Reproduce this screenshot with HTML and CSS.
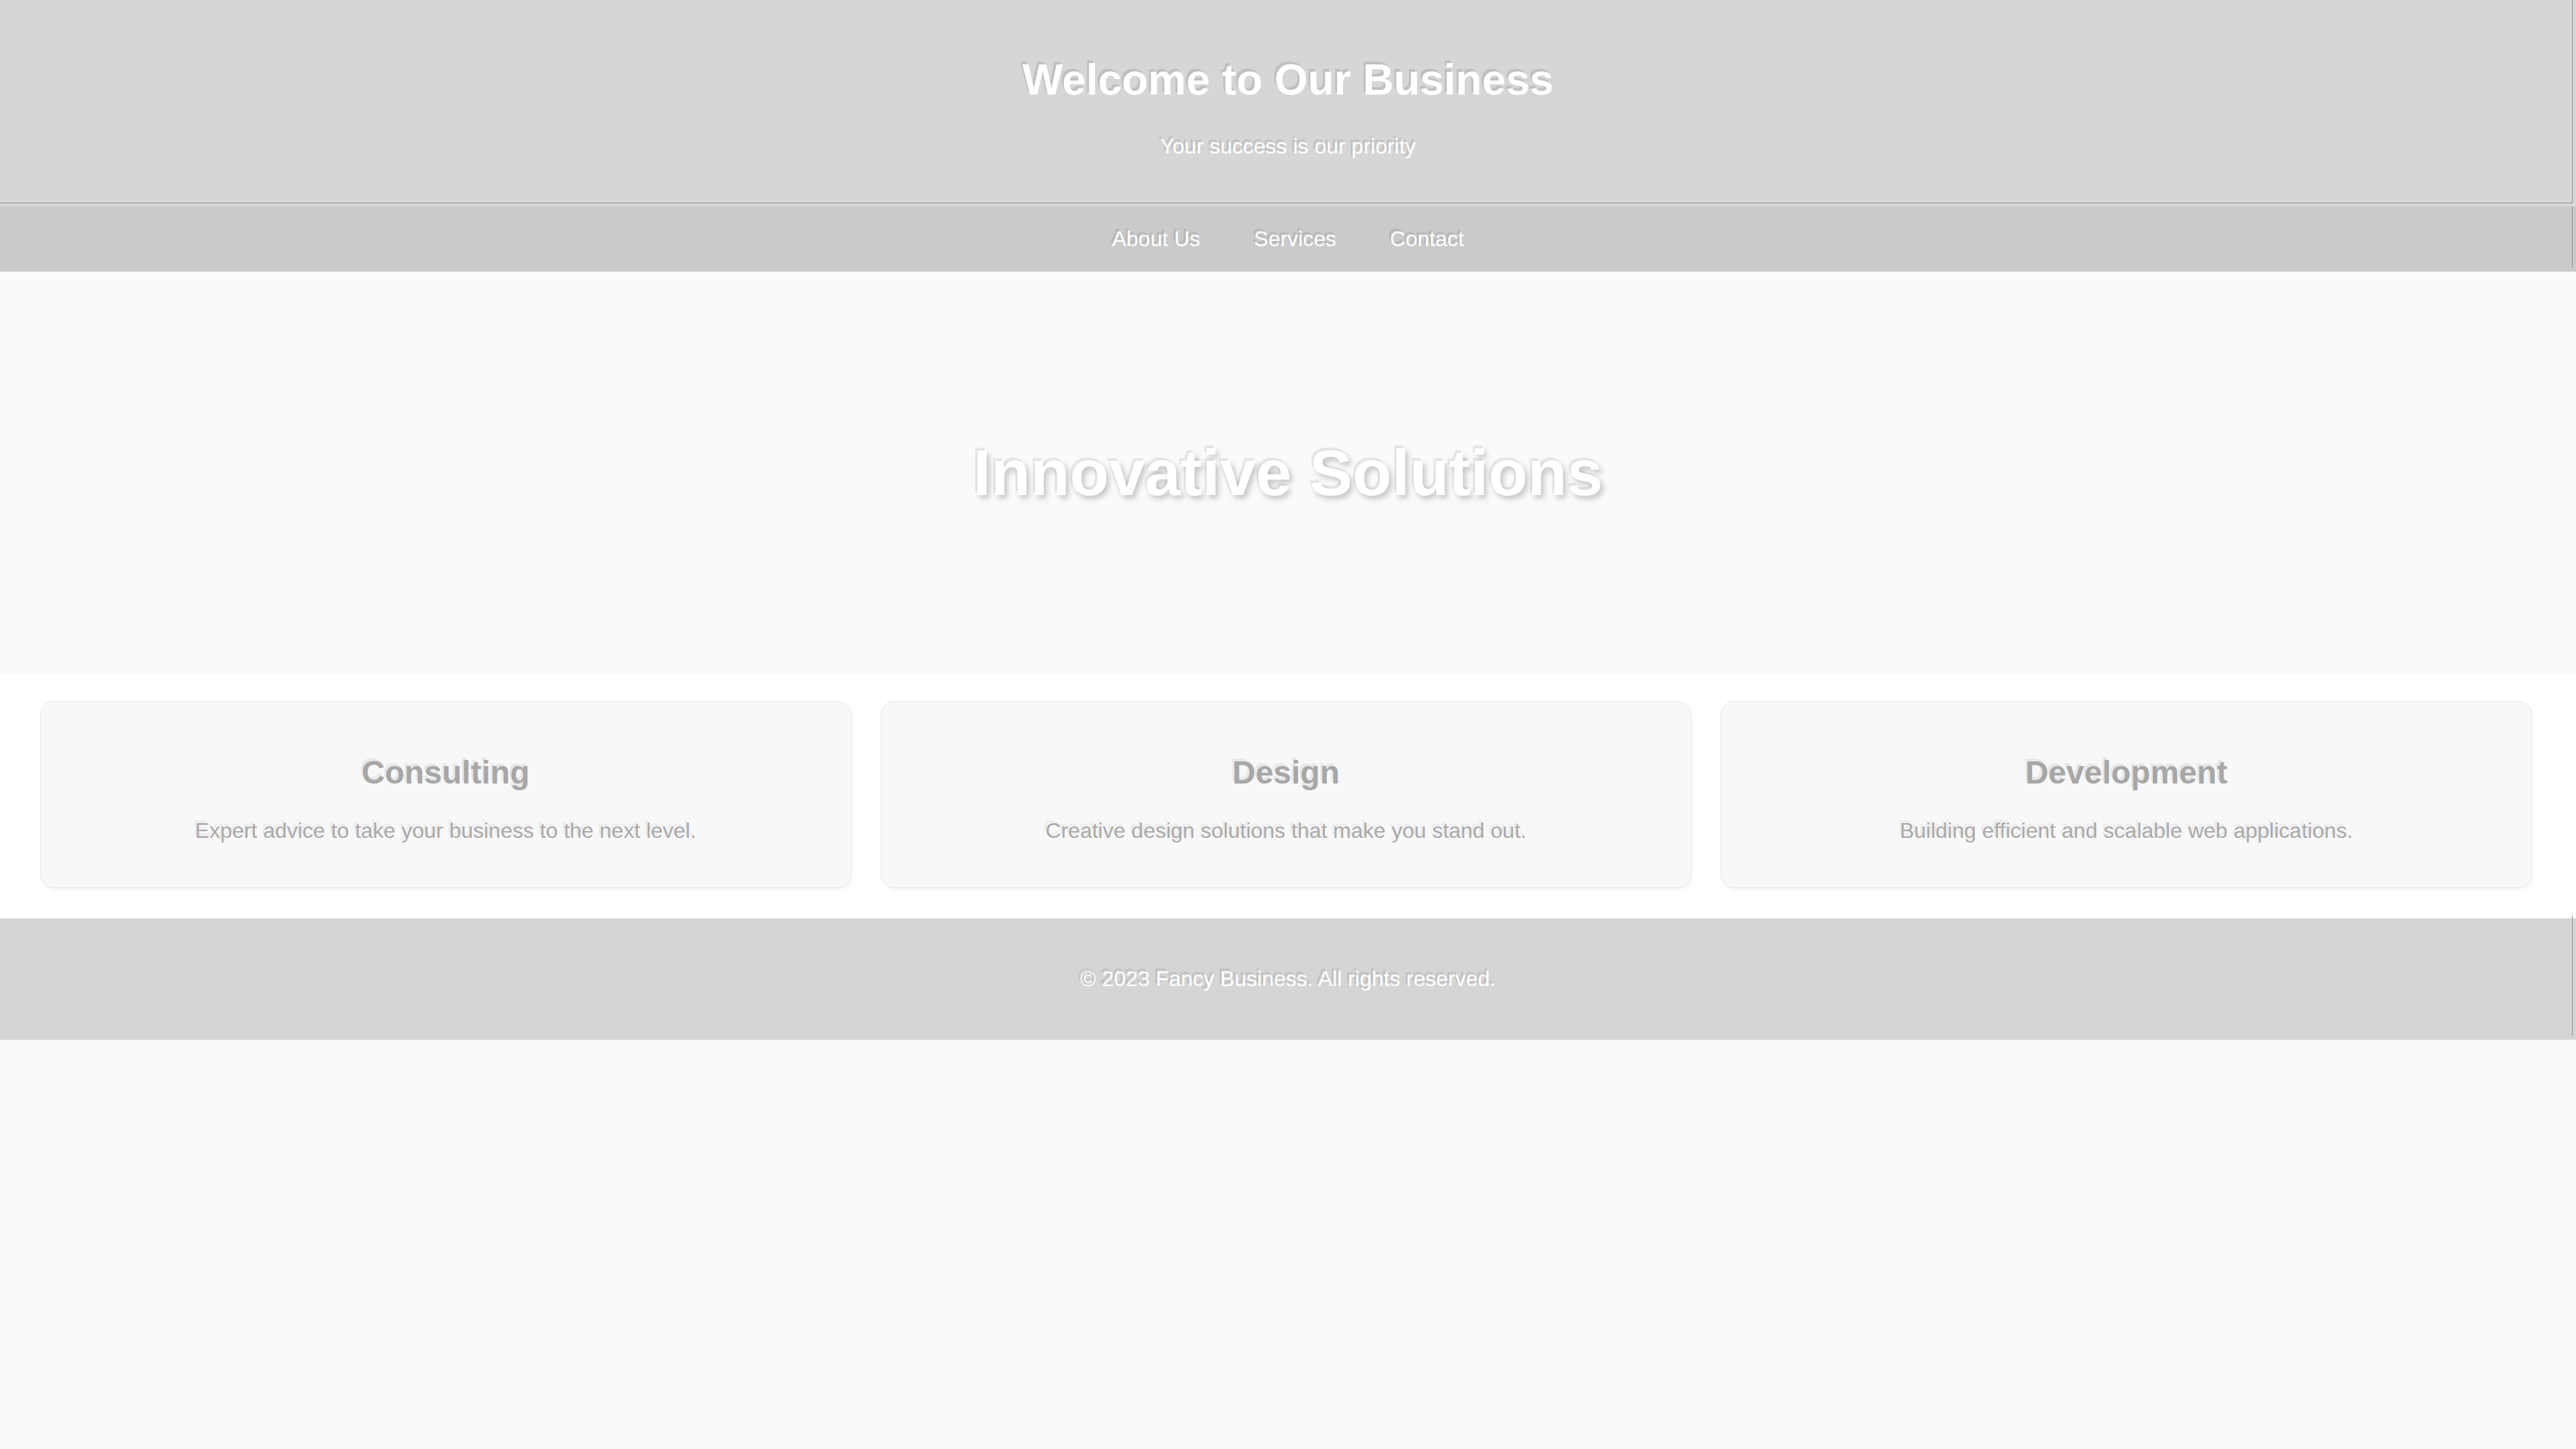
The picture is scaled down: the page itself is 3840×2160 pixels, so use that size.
FILE: index.html
```html
<!DOCTYPE html>
<html lang="en">
<head>
<meta charset="utf-8">
<title>Fancy Business</title>
<link rel="stylesheet" href="styles.css">
</head>
<body>
<header class="site-header">
  <h1 class="site-title">Welcome to Our Business</h1>
  <p class="site-tagline">Your success is our priority</p>
</header>
<nav class="site-nav">
  <a class="nav-link" href="#about">About Us</a>
  <a class="nav-link" href="#services">Services</a>
  <a class="nav-link" href="#contact">Contact</a>
</nav>
<section class="hero">
  <h2 class="hero-title">Innovative Solutions</h2>
</section>
<section class="services">
  <div class="card">
    <h3 class="card-title">Consulting</h3>
    <p class="card-text">Expert advice to take your business to the next level.</p>
  </div>
  <div class="card">
    <h3 class="card-title">Design</h3>
    <p class="card-text">Creative design solutions that make you stand out.</p>
  </div>
  <div class="card">
    <h3 class="card-title">Development</h3>
    <p class="card-text">Building efficient and scalable web applications.</p>
  </div>
</section>
<footer class="site-footer">
  <p class="footer-text">© 2023 Fancy Business. All rights reserved.</p>
</footer>
</body>
</html>
```

FILE: styles.css
```css
html, body {
  margin: 0;
  padding: 0;
}

body {
  background: #fafafa;
  font-family: "Liberation Sans", Arial, sans-serif;
  line-height: 1.15;
}

.site-header {
  position: relative;
  background: #d6d6d6;
  color: #ffffff;
  text-align: center;
  padding: 40px 0;
}

.site-header::after {
  content: "";
  position: absolute;
  top: 0;
  left: 0;
  right: 5px;
  bottom: 5px;
  border-right: 1px solid #8f8f8f;
  border-bottom: 1px solid #8f8f8f;
  pointer-events: none;
}

.site-title {
  margin: 43px 0 43px;
  font-size: 64px;
  font-weight: bold;
  text-shadow: -3px -4px 1px rgba(90, 90, 90, 0.18);
}

.site-tagline {
  margin: 0 0 32px;
  font-size: 32px;
  text-shadow: -3px -4px 1px rgba(90, 90, 90, 0.18);
}

.site-nav {
  position: relative;
  background: #cacaca;
  display: flex;
  justify-content: center;
  padding: 30px 0;
}

.site-nav::after {
  content: "";
  position: absolute;
  top: 0;
  right: 5px;
  bottom: 6px;
  border-right: 1px solid #8f8f8f;
  pointer-events: none;
}

.nav-link {
  color: #ffffff;
  text-decoration: none;
  font-size: 32px;
  margin: 0 40px;
  text-shadow: -3px -4px 1px rgba(90, 90, 90, 0.18);
}

.hero {
  height: 600px;
  background: #fafafa;
  display: flex;
  align-items: center;
  justify-content: center;
}

.hero-title {
  margin: 0;
  color: #ffffff;
  font-size: 96px;
  font-weight: bold;
  text-shadow: 4px 5px 8px rgba(0, 0, 0, 0.22), -3px -4px 1px rgba(90, 90, 90, 0.12);
}

.services {
  background: #ffffff;
  display: grid;
  grid-template-columns: repeat(3, 1fr);
  gap: 44px;
  padding: 40px 66px 45px 60px;
}

.card {
  background: #f8f8f8;
  border: 1px solid #e6e6e6;
  border-radius: 20px;
  box-shadow: 3px 4px 6px rgba(0, 0, 0, 0.035);
  text-align: center;
  padding: 39px 40px 34px;
}

.card-title {
  margin: 39px 0 41px;
  font-size: 48px;
  font-weight: bold;
  color: #a7a7a7;
  text-shadow: -3px -4px 1px rgba(90, 90, 90, 0.1);
}

.card-text {
  margin: 0 0 32px;
  font-size: 32px;
  color: #a9a9a9;
  text-shadow: -3px -4px 1px rgba(90, 90, 90, 0.08);
}

.site-footer {
  position: relative;
  background: #d5d5d5;
  color: #ffffff;
  text-align: center;
  padding: 40px 0;
}

.site-footer::after {
  content: "";
  position: absolute;
  top: -4px;
  right: 5px;
  bottom: 6px;
  border-right: 1px solid #8f8f8f;
  pointer-events: none;
}

.footer-text {
  margin: 32px 0;
  font-size: 32px;
  text-shadow: -3px -4px 1px rgba(90, 90, 90, 0.18);
}
```
